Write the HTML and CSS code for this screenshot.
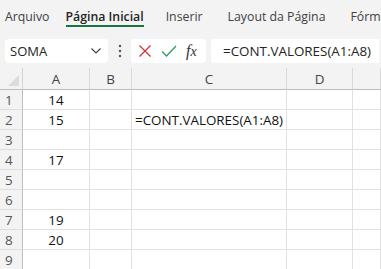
FILE: index.html
```html
<!DOCTYPE html>
<html>

<head>
  <meta http-equiv="Content-Type" content="text/html; charset=UTF-8" />
  <link rel="stylesheet" href="styles.css">
</head>

<body>
  <div class="app">
    <!-- ribbon tabs -->
    <div class="tabs">
      <span class="tab">Arquivo</span>
      <span class="tab active">Página Inicial</span>
      <span class="tab">Inserir</span>
      <span class="tab">Layout da Página</span>
      <span class="tab">Fórmulas</span>
    </div>

    <!-- formula bar -->
    <div class="formula-row">
      <div class="name-box">
        <span>SOMA</span>
        <svg width="12" height="8" viewBox="0 0 12 8"><path d="M1.5 1.5 L6 6 L10.5 1.5" fill="none" stroke="#444" stroke-width="1.2"/></svg>
      </div>
      <div class="dots">
        <svg width="4" height="14" viewBox="0 0 4 14"><circle cx="2" cy="2" r="1.2" fill="#555"/><circle cx="2" cy="7" r="1.2" fill="#555"/><circle cx="2" cy="12" r="1.2" fill="#555"/></svg>
      </div>
      <div class="actions">
        <svg width="14" height="14" viewBox="0 0 14 14"><path d="M1.5 1.5 L12.5 12.5 M12.5 1.5 L1.5 12.5" stroke="#d13438" stroke-width="1.3" fill="none"/></svg>
        <svg width="16" height="14" viewBox="0 0 16 14"><path d="M1 7.5 L5.5 12 L15 2" stroke="#2f9e5a" stroke-width="1.3" fill="none"/></svg>
        <span class="fx">f<i>x</i></span>
      </div>
      <div class="formula-input">=CONT.VALORES(A1:A8)</div>
    </div>

    <!-- sheet grid -->
    <div class="sheet">
      <div class="corner"><span class="tri"></span></div>
      <div class="col-head">A</div>
      <div class="col-head">B</div>
      <div class="col-head">C</div>
      <div class="col-head">D</div>
      <div class="col-head"></div>

      <div class="row-head">1</div><div class="cell num">14</div><div class="cell"></div><div class="cell"></div><div class="cell"></div><div class="cell"></div>
      <div class="row-head">2</div><div class="cell num">15</div><div class="cell"></div><div class="cell txt">=CONT.VALORES(A1:A8)</div><div class="cell"></div><div class="cell"></div>
      <div class="row-head">3</div><div class="cell num"></div><div class="cell"></div><div class="cell"></div><div class="cell"></div><div class="cell"></div>
      <div class="row-head">4</div><div class="cell num">17</div><div class="cell"></div><div class="cell"></div><div class="cell"></div><div class="cell"></div>
      <div class="row-head">5</div><div class="cell num"></div><div class="cell"></div><div class="cell"></div><div class="cell"></div><div class="cell"></div>
      <div class="row-head">6</div><div class="cell num"></div><div class="cell"></div><div class="cell"></div><div class="cell"></div><div class="cell"></div>
      <div class="row-head">7</div><div class="cell num">19</div><div class="cell"></div><div class="cell"></div><div class="cell"></div><div class="cell"></div>
      <div class="row-head">8</div><div class="cell num">20</div><div class="cell"></div><div class="cell"></div><div class="cell"></div><div class="cell"></div>
      <div class="row-head">9</div><div class="cell num"></div><div class="cell"></div><div class="cell"></div><div class="cell"></div><div class="cell"></div>
    </div>
  </div>
</body>

</html>
```

FILE: styles.css
```css
html,
body {
  margin: 0;
  height: 100%;
  overflow: hidden;
}

body {
  font-family: "Open Sans", "Noto Sans", sans-serif;
  color: #242424;
  background: #f3f3f3;
}

.app {
  width: 381px;
  height: 269px;
  overflow: hidden;
}

/* ribbon tabs */
.tabs {
  display: flex;
  height: 30px;
  padding-left: 5px;
  white-space: nowrap;
  font-size: 12.3px;
}

.tab {
  padding-top: 8px;
  margin-right: 25px;
  color: #424242;
}

.tab:first-child {
  margin-right: 16px;
}

.tab.active {
  color: #242424;
  font-weight: 600;
  border-bottom: 2px solid #1a7343;
  height: 17px;
  margin-right: 22px;
}

/* formula bar */
.formula-row {
  display: flex;
  align-items: center;
  height: 24px;
  margin-top: 9px;
  padding-left: 5px;
}

.name-box {
  display: flex;
  align-items: center;
  justify-content: space-between;
  box-sizing: border-box;
  width: 103px;
  height: 24px;
  padding: 0 6px 0 5px;
  background: #fff;
  border-radius: 4px;
  font-size: 13px;
}

.dots {
  display: flex;
  width: 23px;
  justify-content: center;
}

.actions {
  display: flex;
  align-items: center;
  gap: 9px;
  box-sizing: border-box;
  width: 75px;
  height: 24px;
  padding-left: 7px;
  background: #fff;
  border-radius: 4px;
}

.fx {
  font-family: "Liberation Serif", serif;
  font-style: italic;
  font-size: 16px;
  color: #333;
}

.fx i {
  font-size: 14px;
}

.formula-input {
  box-sizing: border-box;
  height: 24px;
  margin-left: 5px;
  width: 168px;
  padding: 3px 0 0 12px;
  background: #fff;
  border-radius: 4px 0 0 4px;
  font-size: 13.4px;
  white-space: nowrap;
}

/* sheet */
.sheet {
  display: grid;
  grid-template-columns: 23px 67px 42px 155px 66px 1fr;
  grid-template-rows: 22px repeat(9, 20px);
  margin-top: 5px;
  background: #fff;
  font-size: 13.4px;
}

.corner {
  position: relative;
  background: #f3f3f3;
  border-right: 1px solid #d4d4d4;
  border-bottom: 1px solid #bdbdbd;
}

.tri {
  position: absolute;
  right: 3px;
  bottom: 3px;
  border-left: 11px solid transparent;
  border-bottom: 11px solid #dcdcdc;
}

.col-head {
  background: #f3f3f3;
  border-right: 1px solid #d9d9d9;
  border-bottom: 1px solid #bdbdbd;
  text-align: center;
  line-height: 22px;
  color: #444;
}

.row-head {
  background: #f3f3f3;
  border-right: 1px solid #bdbdbd;
  border-bottom: 1px solid #dedede;
  padding-left: 5px;
  line-height: 20px;
  color: #555;
}

.cell {
  border-right: 1px solid #e1e1e1;
  border-bottom: 1px solid #e1e1e1;
  line-height: 20px;
  white-space: nowrap;
  color: #111;
}

.cell.num {
  text-align: center;
}

.cell.txt {
  padding-left: 3px;
}
```
